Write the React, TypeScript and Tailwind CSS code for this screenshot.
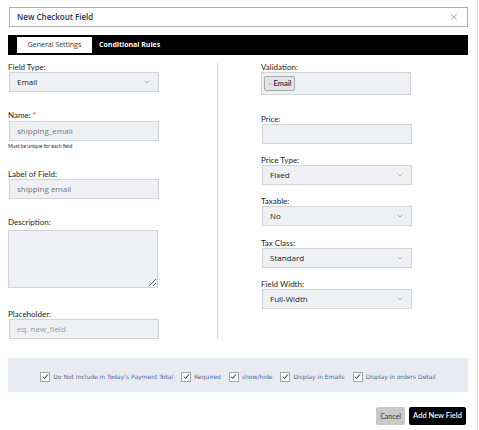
import React from 'react';
import { ChevronDown, X } from 'lucide-react';

const label = "block h-[10px] leading-[10px] text-[8px] text-[#1c1c1c] font-['Lato',sans-serif]";
const box = "w-[150px] h-[20px] ml-px bg-[#eff0f4] border border-[#d2d3d6] text-[8px] font-['Open_Sans',sans-serif] px-[7px] flex items-center";

const SelectBox: React.FC<{ value: string; className?: string }> = ({ value, className = '' }) => (
  <div className={`${box} justify-between text-[#222] ${className}`}>
    <span>{value}</span>
    <ChevronDown size={8} className="text-[#888]" />
  </div>
);

const TextBox: React.FC<{ value?: string; muted?: boolean; className?: string }> = ({ value, muted, className = '' }) => (
  <div className={`${box} ${muted ? 'text-[#9a9a9a]' : 'text-[#777]'} ${className}`}>{value}</div>
);

const Check: React.FC<{ text: string }> = ({ text }) => (
  <label className="flex items-center gap-[3px]">
    <span className="w-[10px] h-[10px] bg-white border border-[#a5a5a5] flex items-center justify-center">
      <svg width="7" height="7" viewBox="0 0 8 8">
        <path d="M1.2 4.3 L3 6.2 L6.8 1.5" stroke="#111" strokeWidth="1.1" fill="none" />
      </svg>
    </span>
    <span className="text-[6px] text-[#55639a] font-['DejaVu_Sans',sans-serif]">{text}</span>
  </label>
);

const App: React.FC = () => {
  return (
    <div className="w-[478px] min-h-[430px] border-r border-[#dedede] bg-white pl-2 pr-[9px] pt-[7px]">
      {/* header */}
      <div className="ml-px h-[20px] border border-[#aeaeae] flex items-center justify-between pl-[7px] pr-[8px]">
        <span className="text-[8px] font-semibold text-[#2b3553] font-['Open_Sans',sans-serif]">New Checkout Field</span>
        <X size={10} className="text-[#9aa3ad]" strokeWidth={2} />
      </div>

      {/* tabs */}
      <div className="mt-[8px] h-[20px] bg-black flex items-center pl-[9px] gap-[7px] font-['Open_Sans',sans-serif]">
        <div className="h-[16px] w-[75px] bg-white flex items-center justify-center text-[7px] text-[#333]">General Settings</div>
        <div className="text-[7px] font-bold text-white">Conditional Rules</div>
      </div>

      {/* form */}
      <div className="flex pb-[11px]">
        <div className="w-[209px]">
          <span className={`${label} mt-[7px]`}>Field Type:</span>
          <SelectBox value="Email" />

          <span className={`${label} mt-[18px]`}>Name: <span className="text-[#d33]">*</span></span>
          <TextBox value="shipping_email" className="mt-px" />
          <span className="block mt-[2px] h-[6px] leading-[6px] text-[5px] text-[#1d2a4a] font-['Lato',sans-serif]">Must be unique for each field</span>

          <span className={`${label} mt-[20px]`}>Label of Field:</span>
          <TextBox value="shipping email" />

          <span className={`${label} mt-[18px]`}>Description:</span>
          <textarea className="block mt-[3px] w-[150px] h-[58px] bg-[#eff0f4] border border-[#d2d3d6] outline-none" />

          <span className={`${label} mt-[21px]`}>Placeholder:</span>
          <TextBox value="eq. new_field" muted />
        </div>

        <div className="w-px bg-[#d8d8d8] mt-[8px]" />

        <div className="pl-[43px]">
          <span className={`${label} mt-[7px]`}>Validation:</span>
          <div className="w-[150px] h-[23px] bg-[#eff0f4] border border-[#d2d3d6] flex items-center pl-[2px]">
            <span className="h-[15px] px-[3px] bg-[#e4e4e4] border border-[#a9a9a9] rounded-[2px] flex items-center gap-[2px] font-['Lato',sans-serif]">
              <span className="text-[6px] text-[#999]">×</span>
              <span className="text-[7.5px] text-[#2a2540] font-semibold">Email</span>
            </span>
          </div>

          <span className={`${label} mt-[19px]`}>Price:</span>
          <TextBox className="ml-0" />

          <span className={`${label} mt-[11px]`}>Price Type:</span>
          <SelectBox value="Fixed" className="ml-0" />

          <span className={`${label} mt-[11px]`}>Taxable:</span>
          <SelectBox value="No" className="ml-0" />

          <span className={`${label} mt-[12px]`}>Tax Class:</span>
          <SelectBox value="Standard" className="ml-0" />

          <span className={`${label} mt-[11px]`}>Field Width:</span>
          <SelectBox value="Full-Width" className="ml-0" />
        </div>
      </div>

      {/* options */}
      <div className="mt-[8px] h-[34px] bg-[#e8ebf2] flex items-center justify-center gap-[8px] pt-[3px]">
        <Check text="Do Not Include in Today's Payment Total" />
        <Check text="Required" />
        <Check text="show/hide" />
        <Check text="Display in Emails" />
        <Check text="Display in orders Detail" />
      </div>

      {/* actions */}
      <div className="mt-[15px] flex justify-end gap-[4px] pr-[2px] font-['Lato',sans-serif]">
        <button className="h-[18px] w-[29px] bg-[#c9c9c9] rounded-[2px] text-[7px] text-[#333]">Cancel</button>
        <button className="h-[18px] w-[57px] bg-black rounded-[2px] text-[7.5px] font-semibold text-white">Add New Field</button>
      </div>
    </div>
  );
};

export default App;
